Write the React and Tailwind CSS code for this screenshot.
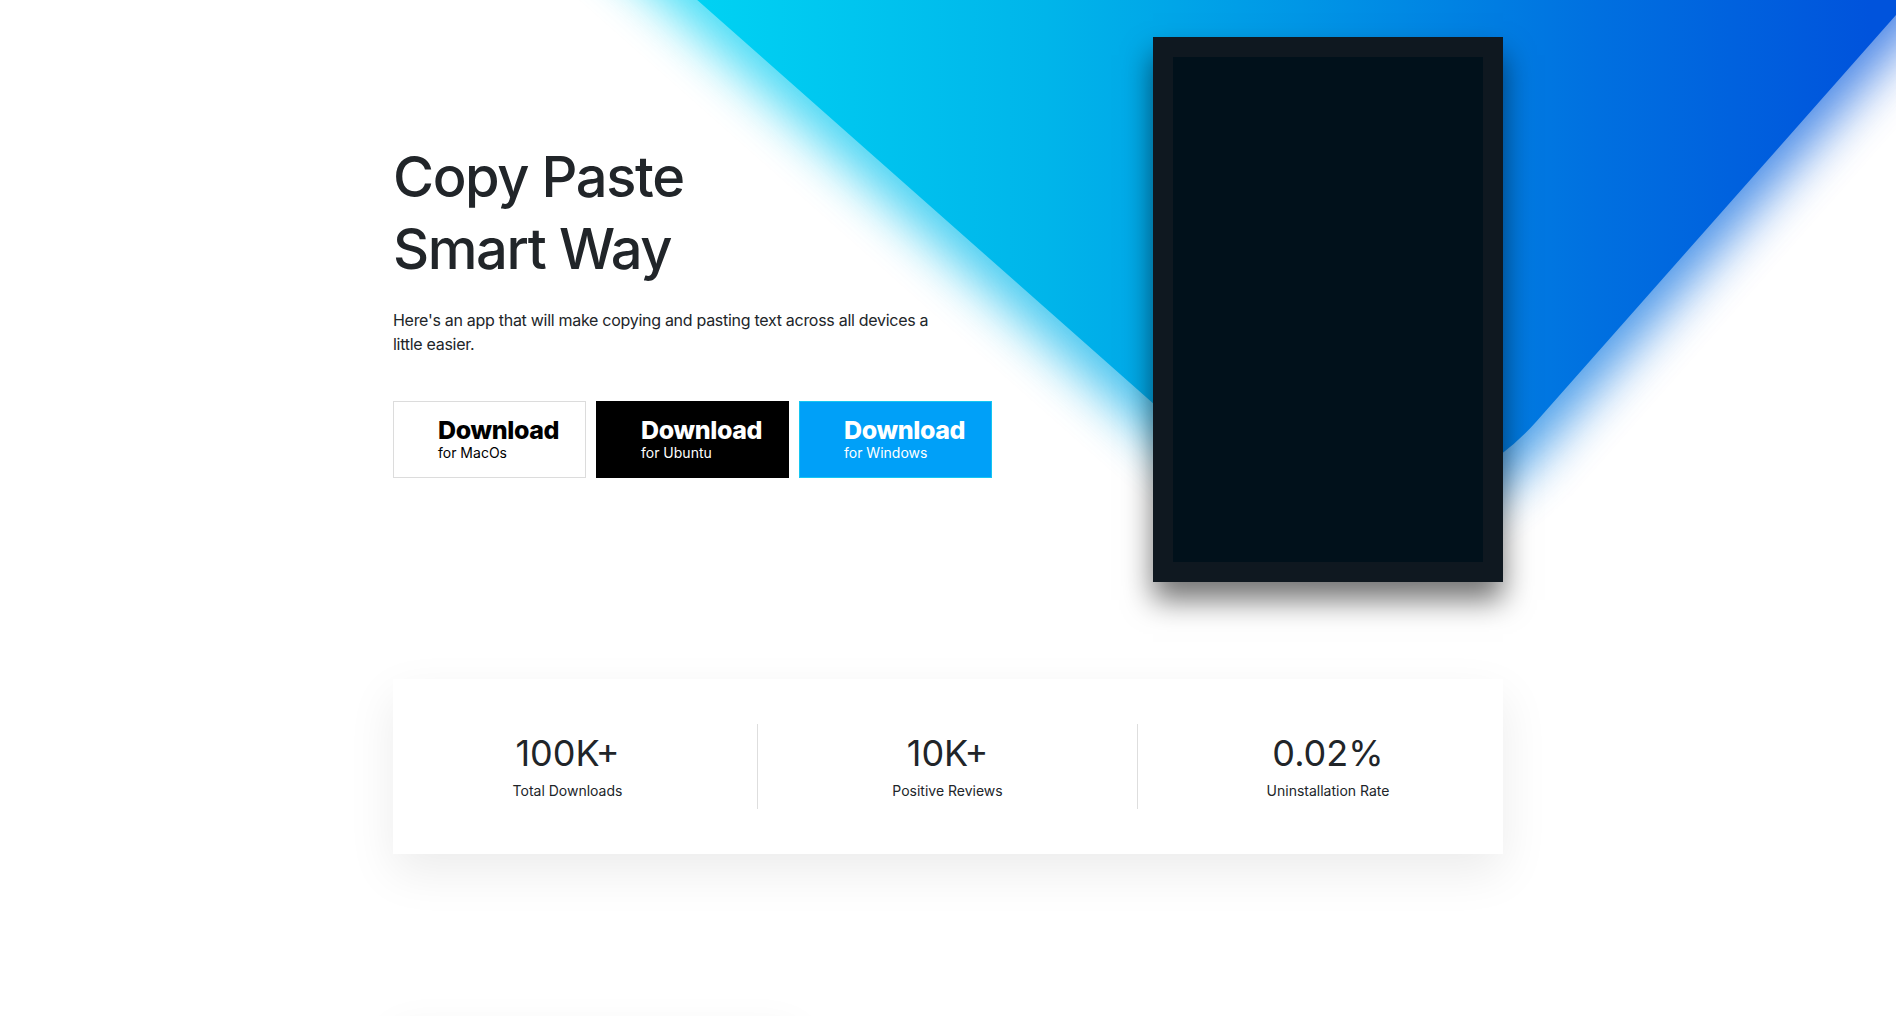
import React from 'react';

const downloads = [
  { label: 'for MacOs', style: 'bg-white border border-[#dcdcdc] text-black' },
  { label: 'for Ubuntu', style: 'bg-black border border-black text-white' },
  { label: 'for Windows', style: 'bg-[#00a0f8] border border-[#14c6f2] text-white' },
];

const stats = [
  { value: '100K+', label: 'Total Downloads' },
  { value: '10K+', label: 'Positive Reviews' },
  { value: '0.02%', label: 'Uninstallation Rate' },
];

export default function App() {
  return (
    <div className="relative min-h-screen overflow-hidden bg-white font-['Inter','Noto_Sans',sans-serif] text-[#212529]">
      {/* Background shape: soft haze + sharp gradient square */}
      <div className="pointer-events-none absolute left-[671px] top-[-966px] h-[1300px] w-[1300px] translate-y-[34px] rotate-[41.5deg] rounded-[240px] opacity-70 blur-[24px] bg-[linear-gradient(48.5deg,#00d2f3_16%,#00b5ea_35%,#0096e6_49%,#0070e0_65%,#0053dc_80%)]" />
      <div className="pointer-events-none absolute left-[671px] top-[-966px] h-[1300px] w-[1300px] rotate-[41.5deg] rounded-[240px] bg-[linear-gradient(48.5deg,#00d2f3_16%,#00b5ea_35%,#0096e6_49%,#0070e0_65%,#0053dc_80%)]" />

      <div className="relative z-10 mx-auto w-[1110px]">
        {/* Hero */}
        <section className="flex items-center justify-between pt-[37px]">
          <div className="w-[620px]">
            <h1 className="text-[56px] font-medium leading-[72px] tracking-[-0.025em] text-[#212529]">
              Copy Paste
              <br />
              Smart Way
            </h1>
            <p className="mt-[23px] w-[540px] text-base leading-6 tracking-[-0.018em] text-[#212529]">
              Here's an app that will make copying and pasting text across all devices a little easier.
            </p>
            <div className="mt-[45px] flex gap-[10px]">
              {downloads.map((d) => (
                <button
                  key={d.label}
                  className={`flex h-[77px] w-[193px] shrink-0 flex-col items-start justify-center pl-[44px] text-left ${d.style}`}
                >
                  <span className="text-[25px] font-extrabold leading-6 tracking-[-0.015em]">Download</span>
                  <span className="mt-[2px] text-sm leading-[18px]">{d.label}</span>
                </button>
              ))}
            </div>
          </div>

          {/* Device mockup */}
          <div className="h-[545px] w-[350px] shrink-0 border-[20px] border-[#0f1820] bg-[#01111b] shadow-[0_18px_28px_rgba(0,0,0,0.55)]" />
        </section>

        {/* Stats */}
        <section className="mt-[97px] bg-white py-[45px] shadow-[0_18px_45px_rgba(0,0,0,0.08)]">
          <div className="-mx-[15px] grid grid-cols-3">
            {stats.map((s, i) => (
              <div
                key={s.label}
                className={`flex h-[85px] flex-col items-center justify-center ${i < 2 ? 'border-r border-[#dedede]' : ''}`}
              >
                <div className="text-[36px] leading-[43px] text-[#212529]">{s.value}</div>
                <div className="mt-[5px] text-sm leading-[21px] text-[#212529]">{s.label}</div>
              </div>
            ))}
          </div>
        </section>

        {/* Next section card peeking in */}
        <section className="mt-[176px] h-[300px] w-[404px] bg-white shadow-[0_0_40px_rgba(0,0,0,0.06)]" />
      </div>
    </div>
  );
}
